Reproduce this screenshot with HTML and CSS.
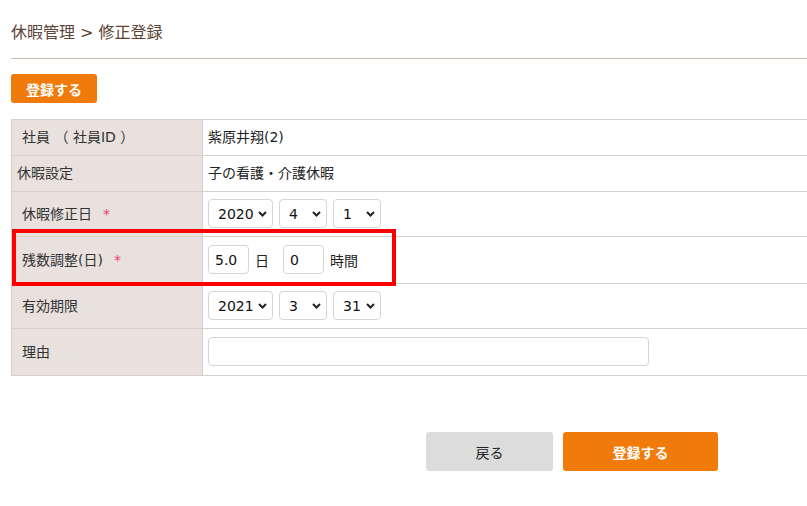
FILE: index.html
```html
<!DOCTYPE html>
<html lang="ja">

<head>
    <meta charset="UTF-8">
    <meta name="viewport" content="width=device-width, initial-scale=1.0">
    <title>休暇管理 修正登録</title>

    <link rel="stylesheet" href="styles.css">
</head>

<body>
    <div class="page">
        <h1 class="crumb">休暇管理 &gt; 修正登録</h1>

        <button class="btn btn-orange btn-small">登録する</button>

        <div class="form-wrap">
            <table class="form">
                <tr class="row-text">
                    <th>社員 （ 社員ID ）</th>
                    <td>紫原井翔(2)</td>
                </tr>
                <tr class="row-text">
                    <th class="tight">休暇設定</th>
                    <td>子の看護・介護休暇</td>
                </tr>
                <tr class="row-ctrl">
                    <th>休暇修正日<span class="req">*</span></th>
                    <td>
                        <div class="ctrls">
                            <select class="sel sel-year"><option>2020</option></select>
                            <select class="sel"><option>4</option></select>
                            <select class="sel"><option>1</option></select>
                        </div>
                    </td>
                </tr>
                <tr class="row-ctrl tall">
                    <th>残数調整(日)<span class="req">*</span></th>
                    <td>
                        <div class="ctrls">
                            <input class="num" type="text" value="5.0">
                            <span class="unit">日</span>
                            <input class="num" type="text" value="0">
                            <span>時間</span>
                        </div>
                    </td>
                </tr>
                <tr class="row-ctrl">
                    <th>有効期限</th>
                    <td>
                        <div class="ctrls">
                            <select class="sel sel-year"><option>2021</option></select>
                            <select class="sel"><option>3</option></select>
                            <select class="sel"><option>31</option></select>
                        </div>
                    </td>
                </tr>
                <tr class="row-ctrl tall">
                    <th>理由</th>
                    <td><input class="reason" type="text"></td>
                </tr>
            </table>

            <!-- 注目枠 -->
            <div class="mark"></div>
        </div>

        <div class="actions">
            <button class="btn btn-grey btn-big back">戻る</button>
            <button class="btn btn-orange btn-big submit">登録する</button>
        </div>
    </div>
</body>

</html>
```

FILE: styles.css
```css
html,
body {
    margin: 0;
    padding: 0;
    overflow: hidden;
    background: #fff;
}

body {
    font-family: "DejaVu Sans", "Noto Sans CJK JP", sans-serif;
    font-size: 14px;
    color: #222;
}

.page {
    width: 1122px;
    padding: 0 11px;
}

.crumb {
    margin: 0;
    padding-top: 23px;
    padding-bottom: 15px;
    font-size: 16px;
    font-weight: normal;
    line-height: 20px;
    color: #5b4434;
    border-bottom: 1px solid #c6b7ac;
}

.btn {
    border: none;
    border-radius: 3px;
    font-family: inherit;
    font-size: 14px;
    cursor: pointer;
    padding: 0;
}

.btn-orange {
    background: #f07a0a;
    color: #fff;
    font-weight: bold;
}

.btn-grey {
    background: #dcdcdc;
    color: #222;
}

.btn-small {
    display: block;
    margin-top: 15px;
    width: 86px;
    height: 29px;
}

.form-wrap {
    position: relative;     /* 注目枠の基準 */
    margin-top: 16px;
}

.form {
    width: 100%;
    border-collapse: collapse;
}

.form th,
.form td {
    border: 1px solid #d8cfc9;
    vertical-align: middle;
    padding: 0 0 3px 0;
}

.form th {
    width: 180px;
    padding-left: 10px;
    background: #e8e1dd;
    color: #333;
    font-weight: normal;
    text-align: left;
}

.form th.tight {
    padding-left: 5px;
}

.form td {
    padding-left: 5px;
    border-right: none;
}

.row-ctrl td {
    padding-bottom: 1px;
}

.row-text {
    height: 36px;
}

.row-ctrl {
    height: 45px;
}

.row-ctrl.tall {
    height: 47px;
}

.req {
    margin-left: 11px;
    color: #ee3c7a;
}

.ctrls {
    display: flex;
    align-items: center;
    gap: 6px;
}

.sel {
    appearance: none;
    -webkit-appearance: none;
    box-sizing: border-box;
    width: 48px;
    height: 29px;
    padding: 0 0 0 9px;
    border: 1px solid #d9d4d0;
    border-radius: 4px;
    background: #fff url("data:image/svg+xml,%3Csvg xmlns='http://www.w3.org/2000/svg' width='9' height='6' viewBox='0 0 9 6'%3E%3Cpath d='M1 1 4.5 4.5 8 1' fill='none' stroke='%23222' stroke-width='2'/%3E%3C/svg%3E") no-repeat right 5px center;
    font-family: inherit;
    font-size: 14px;
    color: #111;
}

.sel-year {
    width: 65px;
}

.num {
    box-sizing: border-box;
    width: 41px;
    height: 29px;
    padding: 0 6px;
    border: 1px solid #d9d4d0;
    border-radius: 4px;
    font-family: inherit;
    font-size: 14px;
    color: #111;
}

.unit {
    margin-right: 8px;
}

.reason {
    display: block;
    box-sizing: border-box;
    width: 441px;
    height: 29px;
    border: 1px solid #d9d4d0;
    border-radius: 4px;
}

.mark {
    position: absolute;
    left: 1px;
    top: 110px;
    width: 376px;
    height: 49px;
    border: 4px solid #ff0000;
    pointer-events: none;
}

.actions {
    display: flex;
    gap: 10px;
    margin-top: 56px;
    padding-left: 415px;
}

.btn-big {
    height: 39px;
}

.back {
    width: 127px;
}

.submit {
    width: 155px;
}
```
